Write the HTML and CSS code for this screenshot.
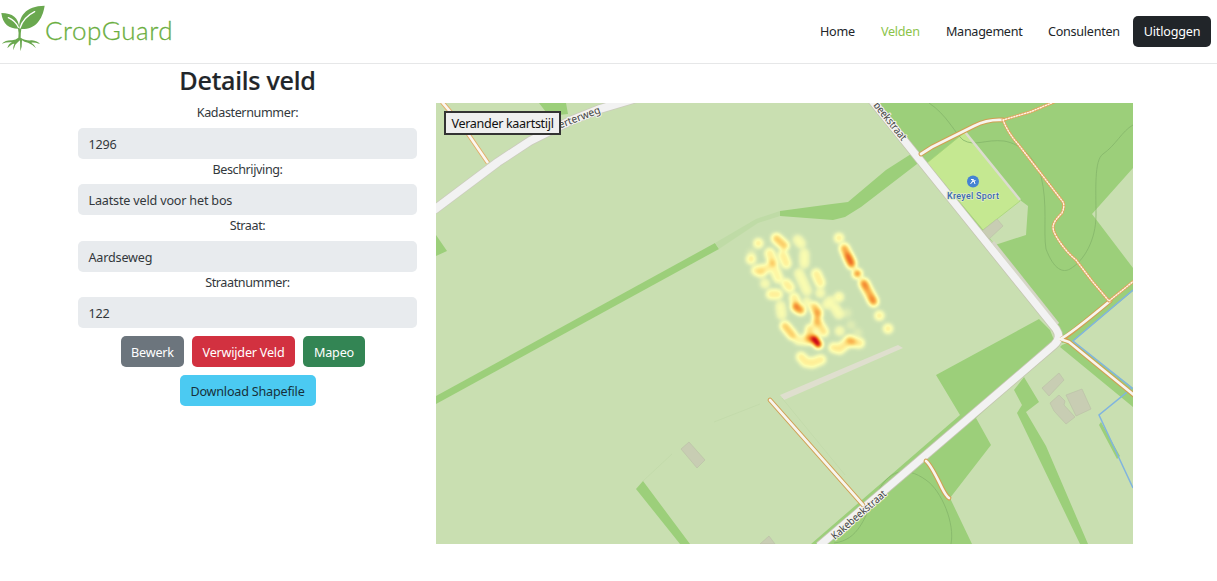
FILE: index.html
```html
<!DOCTYPE html>
<html lang="nl">
<head>
<meta charset="utf-8">
<title>CropGuard</title>
<link rel="stylesheet" href="styles.css">
</head>
<body>
<header class="navbar">
  <a class="brand">
    <svg class="brand-mark" viewBox="0 0 135 156" aria-hidden="true">
      <path fill="#6aa84f" d="M58 86C56 50 76 18 134 17C127 60 106 88 64 87Q62 98 62 113C72 120 82 122 96 121Q112 123 120 132Q103 127 94 128Q104 134 108 145Q96 132 84 128Q72 126 66 121L65 140L61 154L60 121Q52 128 46 134L40 151Q38 142 43 131Q35 130 22 145Q25 132 36 127Q20 126 5 131Q17 120 36 121Q48 120 55 113Q57 98 54 86C28 86 8 74 4 39C38 40 56 52 58 86Z"/>
      <path fill="none" stroke="#fff" stroke-width="4" stroke-linecap="round" d="M60 84Q70 52 104 35M55 82Q46 62 25 53"/>
    </svg>
    <span class="brand-name">CropGuard</span>
  </a>
  <nav class="nav-links">
    <a class="nav-link home">Home</a>
    <a class="nav-link velden active">Velden</a>
    <a class="nav-link management">Management</a>
    <a class="nav-link consulenten">Consulenten</a>
    <a class="btn btn-dark">Uitloggen</a>
  </nav>
</header>
<main class="content">
  <section class="details">
    <h1>Details veld</h1>
    <label>Kadasternummer:</label><div class="field">1296</div>
    <label>Beschrijving:</label><div class="field">Laatste veld voor het bos</div>
    <label>Straat:</label><div class="field">Aardseweg</div>
    <label>Straatnummer:</label><div class="field">122</div>
    <div class="actions">
      <button class="btn btn-grey">Bewerk</button>
      <button class="btn btn-red">Verwijder Veld</button>
      <button class="btn btn-green">Mapeo</button>
    </div>
    <button class="btn btn-info">Download Shapefile</button>
  </section>
  <section class="map">
    <svg class="map-canvas" viewBox="436 103 697 441" aria-hidden="true">
      <defs>
        <filter id="heat" x="-20%" y="-20%" width="140%" height="140%" color-interpolation-filters="sRGB">
          <feGaussianBlur stdDeviation="7"/>
          <feColorMatrix values="0 0 0 1 0  0 0 0 1 0  0 0 0 1 0  0 0 0 1 0"/>
          <feComponentTransfer>
            <feFuncR type="table" tableValues="1 1 1 1 .99 .98 .96 .93 .88 .8 .68"/>
            <feFuncG type="table" tableValues="1 1 1 .94 .85 .72 .58 .4 .22 .06 0"/>
            <feFuncB type="table" tableValues=".75 .7 .69 .6 .46 .33 .22 .15 .12 .1 .1"/>
            <feFuncA type="table" tableValues="0 .6 .95 1 1 1 1 1 1 1 1"/>
          </feComponentTransfer>
        </filter>
      </defs>
      <rect x="436" y="103" width="697" height="441" fill="#c9dfb1"/>
      <!-- woods -->
      <g fill="#9ccf7a">
        <path d="M539 103H566L568 114L549 116ZM436 235L447 251L436 256Z"/>
        <path d="M436 396L715 243L719 249L436 404Z"/>
        <path fill="#bfdba6" d="M715 243L756 219L780 211V216L758 223L719 249Z"/>
        <path d="M780 211L832 204L848 202L886 170L911 154L919 160L917 164L861 207L845 217L833 220L780 216Z"/>
        <path d="M880 103H1133V291L1073 341L1062 343L995 245L910 148L875 103Z"/>
        <path d="M1039 319L936 375L960 415L900 467L811 544H972L950 498L991 445L976 418L1056 345L1050 330Z"/>
        <path d="M1024 377L1039 402L1026 412L1046 446L1088 544H1080L1017 413L1022 405L1014 390Z"/>
        <path d="M1062 345L1072 341L1133 388V407L1060 347ZM636 489L643 481L690 544H680ZM1101 422L1120 456L1117 459L1099 425Z"/>
      </g>
      <path fill="#c9dfb1" d="M1020 200L1028 206L1026 235L995 245L982 228ZM1133 168L1092 214L1133 268Z"/>
      <path fill="#c5e891" stroke="#a4d473" stroke-width=".7" d="M927 163L965 132L1020 201L983 230Z"/>
      <!-- contour lines -->
      <g fill="none" stroke="#85b56a" stroke-width="1" opacity=".8">
        <path d="M929 103C947 115 954 132 963 140C975 147 985 139 1004 141C1022 144 1034 158 1041 176C1048 205 1043 231 1046 249C1054 270 1063 273 1070 269C1084 261 1096 240 1096 215C1096 190 1094 160 1103 154C1116 145 1122 131 1133 125"/>
        <path d="M834 543C859 540 864 518 876 495C888 470 905 465 926 480C942 491 955 524 951 544"/>
      </g>
      <path fill="#dfdfce" d="M780 395L898 345L903 348L784 400Z"/>
      <path fill="none" stroke="#c1d9a9" stroke-width=".8" d="M714 422L760 404M643 481L672 454M782 398L845 475"/>
      <!-- buildings -->
      <g fill="#c8cdb3" stroke="#bbc1a8" stroke-width=".7">
        <path d="M681 449L689 442L705 460L697 468ZM760 544L769 536L775 544ZM982 231L997 219L1003 226L989 239Z"/>
        <path d="M1042 388L1059 373L1064 380L1049 396ZM1050 403L1059 395L1065 401L1064 405L1075 417L1066 424L1054 411ZM1066 395L1082 389L1091 409L1076 416Z"/>
      </g>
      <path fill="none" stroke="#80b4df" stroke-width="1.5" d="M1133 290L1073 341L1132 388L1099 415L1133 488"/>
      <!-- main roads -->
      <g fill="none" stroke-linejoin="round">
        <path stroke="#dcdccf" stroke-width="2.5" d="M965 132L1020 200"/>
        <path stroke="#cbcbbd" stroke-width="9.500" d="M434 210L498 162L530 141L570 121L600 109L640 97"/>
        <path stroke="#f2f2f2" stroke-width="8" d="M434 210L498 162L530 141L570 121L600 109L640 97"/>
        <path stroke="#c5c6b2" stroke-width="9" d="M870 98L1056 329Q1062 338 1054 345L900 477L819 546"/>
        <path stroke="#d5d6c6" stroke-width="3" d="M993 242L1058 324"/>
        <path stroke="#f2f2f2" stroke-width="7.500" d="M870 98L1056 329Q1062 338 1054 345L900 477L819 546"/>
      </g>
      <!-- tracks -->
      <g fill="none" stroke-linecap="round" stroke-linejoin="round">
        <g stroke="#d19f52" stroke-width="4.800">
          <path d="M770 400L863 505M926 461Q931 465 942 488Q946 496 949 498"/>
          <path d="M921 154L932 147L974 126Q988 119 1003 120M1062 339Q1068 336 1110 301M1062 339L1069 342L1135 396"/>
        </g>
        <g stroke="#f7f5ee" stroke-width="2.700">
          <path d="M770 400L863 505M926 461Q931 465 942 488Q946 496 949 498"/>
          <path d="M921 154L932 147L974 126Q988 119 1003 120M1060 339Q1068 336 1110 301M1060 339L1069 342L1135 396"/>
        </g>
        <path stroke="#e0a55e" stroke-width="3" d="M1003 120Q1008 133 1018 144L1063 202Q1065 206 1062 213C1052 223 1051 227 1056 236Q1064 250 1076 260L1092 281L1109 301L1135 280M1003 120L1030 112L1054 102"/>
        <path stroke="#fff5e4" stroke-width="1.4" stroke-dasharray="1.2 1.6" d="M1003 120Q1008 133 1018 144L1063 202Q1065 206 1062 213C1052 223 1051 227 1056 236Q1064 250 1076 260L1092 281L1109 301L1135 280M1003 120L1030 112L1054 102"/>
        <path stroke="#e4ad68" stroke-width="4.500" stroke-linecap="butt" d="M442 102L464 128L488 163"/>
        <path stroke="#fbf7f1" stroke-width="2.700" stroke-linecap="butt" d="M442 102L464 128L488 163"/>
      </g>
      <!-- street and place names -->
      <g class="street">
        <text transform="translate(560 128.500) rotate(-21)" textLength="44" lengthAdjust="spacingAndGlyphs">erterweg</text>
        <text transform="translate(873 105.500) rotate(51)" textLength="46" lengthAdjust="spacingAndGlyphs">beekstraat</text>
        <text transform="translate(835 540) rotate(-41)" textLength="69" lengthAdjust="spacingAndGlyphs">Kakebeekstraat</text>
      </g>
      <circle cx="973" cy="181.500" r="6" fill="#4583d3"/>
      <path fill="none" stroke="#fff" stroke-width="1" d="M971 179.500H973.500L975 184M973 180L972 182L970.500 184M972 182L975.500 180.500"/>
      <text class="place" x="947" y="199" textLength="52">Kreyel Sport</text>
      <!-- measured crop intensity -->
      <g transform="translate(735 225) scale(.333333)" filter="url(#heat)" fill="none" stroke="#000" stroke-width="27" stroke-linecap="round">
        <path opacity=".44" d="M124 40L148 62M150 303L172 330M238 246L248 264"/>
        <path opacity=".31" d="M70 55h.1M48 103h.1M104 84L114 112M64 136L90 132M144 90L154 116M154 176L164 188M108 208L128 208M178 218L182 232M312 39h.1M433 272h.1M459 311h.1M198 395L212 411L232 414L258 404M345 344L350 348M244 146L256 174"/>
        <path opacity=".26" d="M110 118L120 136L130 160M190 344L222 346"/>
        <path opacity=".33" d="M296 368L314 372L340 350L374 354"/>
        <path opacity=".19" d="M188 44L198 56M208 85L208 116M192 145L216 198M90 176h.1M136 242L140 270M300 248L312 268M276 238L286 228M314 318h.1M78 146h.1M216 232h.1M256 204h.1M312 216h.1"/>
        <path opacity=".07" d="M312 216h.1M336 264h.1M348 300h.1M368 324h.1M50 85h.1"/>
        <path opacity=".54" d="M328 70L350 118M386 174L416 230"/>
        <path opacity=".36" d="M340 96L348 110M246 290L266 320M226 312L224 332"/>
        <path opacity=".52" d="M182 246L198 256"/>
        <path opacity=".22" d="M188 250h.1M390 180h.1M412 224h.1"/>
        <path opacity=".6" d="M367 146h.1"/>
        <path opacity=".25" d="M222 342L240 342M246 290L248 264"/>
        <path opacity=".85" stroke-width="22" d="M238 342L250 358"/>
        <path opacity=".8" stroke-width="22" d="M240 344L248 356"/>
      </g>
    </svg>
    <button class="map-style">Verander kaartstijl</button>
  </section>
</main>
</body>
</html>
```
FILE: styles.css
```css
* { box-sizing: border-box; }
body { margin: 0; height: 581px; overflow: hidden; background: #fff; color: #212529; font: 12.6px/19px "Noto Sans", "Open Sans", sans-serif; letter-spacing: -.27px; }
.navbar { display: flex; justify-content: space-between; align-items: flex-start; height: 64px; border-bottom: 1px solid #e6e7e8; padding-right: 6px; }
.brand { display: flex; align-items: flex-start; }
.brand-mark { width: 45px; height: 52px; flex: none; }
.brand-name { font: 300 26px/32px Lato, sans-serif; letter-spacing: .55px; color: #6aae3e; margin: 14px 0 0 0; -webkit-text-stroke: .3px #6aae3e; }
.nav-links { display: flex; align-items: center; padding-top: 16px; }
.nav-link { white-space: nowrap; flex: none; }
.home { width: 61px; }
.velden { width: 65px; }
.management { width: 102px; letter-spacing: -.3px; }
.consulenten { width: 85px; }
.active { color: #8bc34a; }
.btn { display: block; height: 31px; padding: 0; border: 0; border-radius: 5px; color: #fff; text-align: center; white-space: nowrap; font: 12.6px/31px "Noto Sans", "Open Sans", sans-serif; letter-spacing: -.2px; }
.btn-dark { width: 78px; background: #212529; }
.content { display: flex; padding-left: 78px; gap: 19px; }
.details { width: 339px; display: flex; flex-direction: column; align-items: center; }
.details .btn { padding-top: 1px; }
h1 { font: 500 25.2px/32px "Noto Sans", "Open Sans", sans-serif; letter-spacing: -.25px; -webkit-text-stroke: .2px #212529; margin: 0 0 6px; white-space: nowrap; }
label { height: 25.500px; line-height: 21px; letter-spacing: -.4px; color: #33383c; }
.field { width: 339px; height: 31px; border-radius: 5px; background: #e8ebee; padding-left: 10.500px; line-height: 33px; letter-spacing: -.18px; color: #33383c; }
.actions { display: flex; gap: 8px; margin: 8px 0; padding-right: 9px; }
.btn-grey { width: 63px; background: #6c757d; }
.btn-red { width: 103px; background: #d23140; }
.btn-green { width: 62px; background: #338554; }
.btn-info { width: 136px; background: #4bcaf2; color: #17303a; }
.map { position: relative; width: 697px; height: 441px; margin-top: 39px; overflow: hidden; }
.map-canvas { display: block; width: 697px; height: 441px; letter-spacing: 0; }
.map-style { position: absolute; left: 8px; top: 8px; width: 117px; height: 24px; padding: 0; border: 2px solid #333; background: #efefef; color: #111; font: 12.6px/19px "Noto Sans", "Open Sans", sans-serif; letter-spacing: -.33px; white-space: nowrap; }
.street { font: 10.500px "Noto Sans", sans-serif; fill: #444; stroke: #f4f4f0; stroke-width: 2px; paint-order: stroke; }
.place { font: 500 9px Roboto, sans-serif; fill: #3c68b5; stroke: #e0efc4; stroke-width: 1.500px; paint-order: stroke; }
```
